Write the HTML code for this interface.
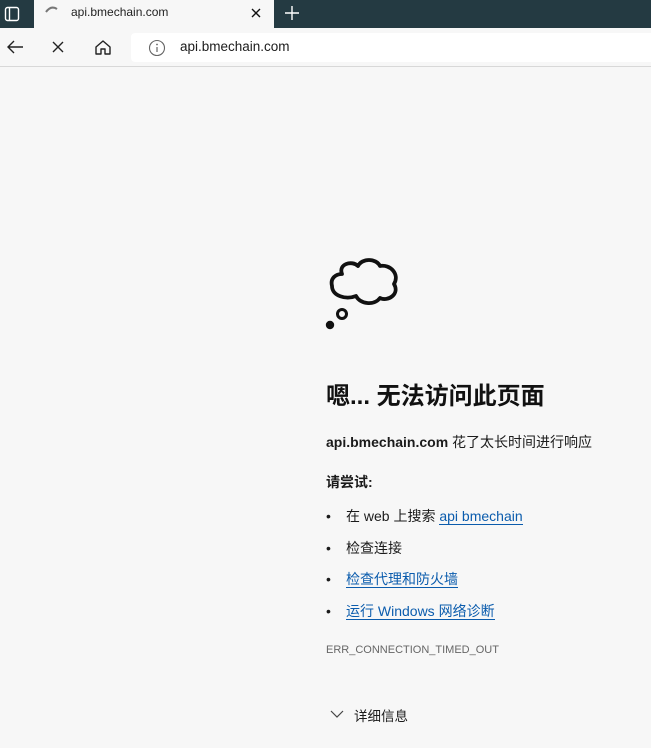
<!DOCTYPE html>
<html><head><meta charset="utf-8"><style>
*{margin:0;padding:0;box-sizing:border-box}
body{width:651px;height:748px;overflow:hidden;background:#f7f7f7;font-family:"Segoe UI","Liberation Sans","Noto Sans CJK SC",sans-serif;position:relative;color:#1b1b1b}
.tabbar{position:absolute;left:0;top:0;width:651px;height:28px;background:#243a42}
.tab{position:absolute;left:34px;top:0;width:240px;height:28px;background:#f7f7f7}
.toolbar{position:absolute;left:0;top:28px;width:651px;height:39px;background:#f7f7f7;border-bottom:1px solid #d8d8d8}
.addr{position:absolute;left:131px;top:33px;width:530px;height:29px;background:#fff;border-radius:4px}
.t{position:absolute;white-space:nowrap}
a{color:#0b5cad;text-decoration:none;border-bottom:1px solid #0b5cad}
.li{position:absolute;left:326px;font-size:14px}
.li b{font-weight:normal;display:inline-block;width:20px}
</style></head><body>
<div class="tabbar"></div>
<svg style="position:absolute;left:4px;top:6px" width="16" height="16"><rect x="1.5" y="1.5" width="13" height="13" rx="2" fill="none" stroke="#fff" stroke-width="1.4"/><line x1="5.5" y1="2" x2="5.5" y2="14" stroke="#fff" stroke-width="1.4"/></svg>
<div class="tab"></div>
<svg style="position:absolute;left:44px;top:4px" width="16" height="10"><path d="M2 8 Q7 1 13 5" fill="none" stroke="#777" stroke-width="2"/></svg>
<div class="t" style="left:71px;top:5px;font-size:12px;color:#222">api.bmechain.com</div>
<svg style="position:absolute;left:250px;top:7px" width="12" height="12"><path d="M2 2L10 10M10 2L2 10" stroke="#111" stroke-width="1.4"/></svg>
<svg style="position:absolute;left:284px;top:5px" width="16" height="16"><path d="M8 1V15M1 8H15" stroke="#fff" stroke-width="1.4"/></svg>
<div class="toolbar"></div>
<svg style="position:absolute;left:6px;top:39px" width="18" height="16"><path d="M17 8H2M8 2L2 8L8 14" fill="none" stroke="#222" stroke-width="1.4"/></svg>
<svg style="position:absolute;left:51px;top:40px" width="14" height="14"><path d="M2 2L12 12M12 2L2 12" stroke="#222" stroke-width="1.4"/></svg>
<svg style="position:absolute;left:94px;top:39px" width="18" height="17"><path d="M2 8L9 2L16 8V15H11V10H7V15H2Z" fill="none" stroke="#222" stroke-width="1.4" stroke-linejoin="round"/></svg>
<div class="addr"></div>
<svg style="position:absolute;left:148px;top:39px" width="18" height="18"><circle cx="9" cy="9" r="7.5" fill="none" stroke="#666" stroke-width="1.1"/><line x1="9" y1="8" x2="9" y2="13" stroke="#666" stroke-width="1.2"/><circle cx="9" cy="5.5" r=".9" fill="#666"/></svg>
<div class="t" style="left:180px;top:39px;font-size:13.5px;color:#1b1b1b">api.bmechain.com</div>
<svg style="position:absolute;left:324px;top:256px" width="80" height="76"><path d="M18 18 C14 8 28 4 34 10 C38 2 52 2 56 10 C66 8 76 18 70 28 C76 38 64 46 56 42 C50 50 36 48 32 40 C22 44 8 40 8 30 C6 22 12 18 18 18Z" fill="none" stroke="#111" stroke-width="3.8" stroke-linejoin="round"/><circle cx="18" cy="58" r="4.5" fill="none" stroke="#111" stroke-width="3"/><circle cx="6" cy="69" r="4.2" fill="#111"/></svg>
<div class="t" style="left:326px;top:376px;font-size:24px;font-weight:bold;color:#111">嗯... 无法访问此页面</div>
<div class="t" style="left:326px;top:432px;font-size:14px"><span style="font-weight:bold">api.bmechain.com</span> 花了太长时间进行响应</div>
<div class="t" style="left:326px;top:472px;font-size:14px;font-weight:bold">请尝试:</div>
<div class="li t" style="top:506px"><b>•</b>在 web 上搜索 <a>api bmechain</a></div>
<div class="li t" style="top:538px"><b>•</b>检查连接</div>
<div class="li t" style="top:569px"><b>•</b><a>检查代理和防火墙</a></div>
<div class="li t" style="top:601px"><b>•</b><a>运行 Windows 网络诊断</a></div>
<div class="t" style="left:326px;top:644px;font-size:11px;color:#666">ERR_CONNECTION_TIMED_OUT</div>
<svg style="position:absolute;left:330px;top:709px" width="14" height="10"><path d="M1 2L7 8L13 2" fill="none" stroke="#444" stroke-width="1.2"/></svg>
<div class="t" style="left:354px;top:705px;font-size:13.5px">详细信息</div>
</body></html>
